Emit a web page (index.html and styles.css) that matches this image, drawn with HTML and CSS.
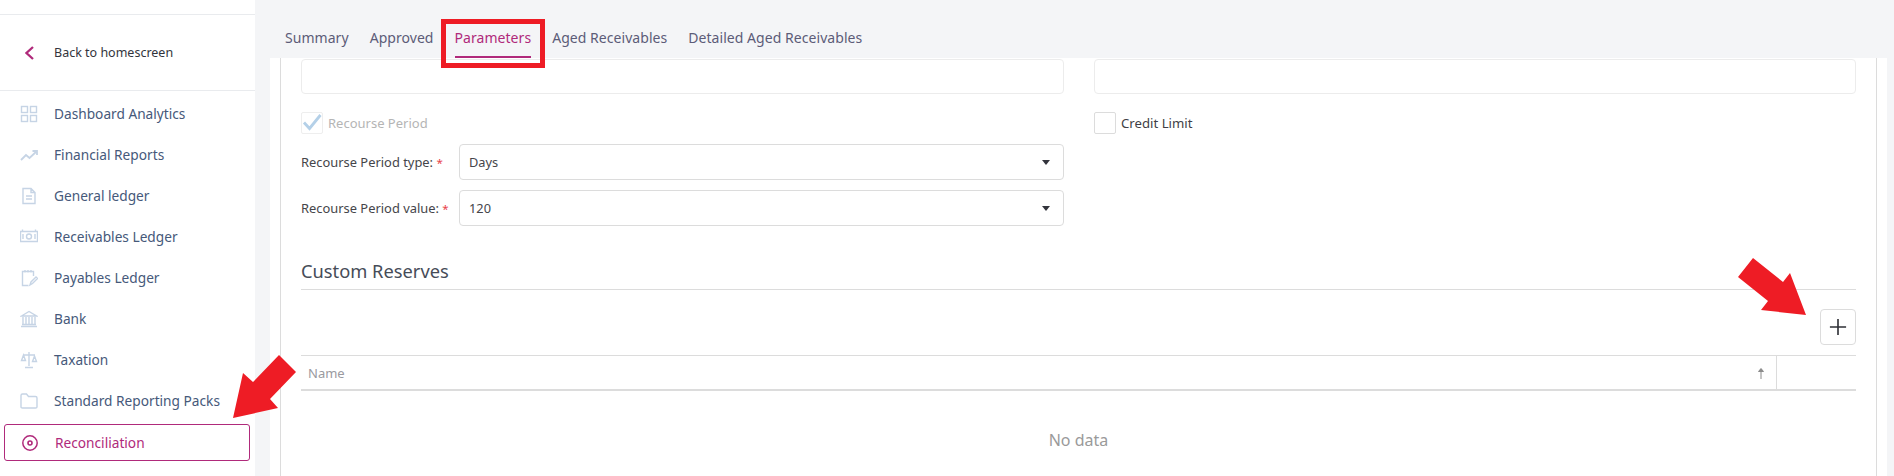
FILE: index.html
```html
<!DOCTYPE html>
<html lang="en">
<head>
<meta charset="utf-8">
<title>Parameters</title>
<link rel="stylesheet" href="styles.css">
</head>
<body>
<aside class="sidebar">
  <div class="side-top"></div>
  <a class="back"><svg class="chev" viewBox="0 0 10 14"><path d="M8 1 1.500 7 8 13"/></svg><span>Back to homescreen</span></a>
  <nav class="menu">
    <a class="item"><svg viewBox="0 0 18 18"><rect x="1.500" y="1.500" width="6" height="6"/><rect x="10.500" y="1.500" width="6" height="6"/><rect x="1.500" y="10.500" width="6" height="6"/><rect x="10.500" y="10.500" width="6" height="6"/></svg><span>Dashboard Analytics</span></a>
    <a class="item"><svg class="bold" viewBox="0 0 18 18"><path d="M1 14 6 9l3.500 3L17 5M12.500 5H17v4"/></svg><span>Financial Reports</span></a>
    <a class="item"><svg viewBox="0 0 18 18"><path d="M3 1.500h8l4 4v11H3zM11 1.500v4h4M6 9h6M6 12h6"/></svg><span>General ledger</span></a>
    <a class="item"><svg viewBox="0 0 18 18"><path d="M0.500 3.500h17v10H.5zM2.500 1.500v2M15.500 1.500v2"/><circle cx="9" cy="8.500" r="2.500"/><path d="M3 6v5M15 6v5"/></svg><span>Receivables Ledger</span></a>
    <a class="item"><svg viewBox="0 0 18 18"><path d="M13.500 7V2.500h-11v14h6M5 1v2.500M8 1v2.500M11 1v2.500M10 16l1-3 5-5 1.500 1.500-5 5z"/></svg><span>Payables Ledger</span></a>
    <a class="item"><svg viewBox="0 0 18 18"><path d="M1.500 6 9 1.500 16.500 6zM3 7v7M6 7v7M9 7v7M12 7v7M15 7v7M2 14.500h14M1 16.500h16"/></svg><span>Bank</span></a>
    <a class="item"><svg viewBox="0 0 18 18"><path d="M9 1v14M5 16.500h8M3 4h12M3.500 4 1.500 9.500h4zM14.500 5l-2 5.500h4z"/></svg><span>Taxation</span></a>
    <a class="item"><svg viewBox="0 0 18 18"><path d="M1 3.500q0-1.500 1.500-1.500h4l2 2.500h7q1.500 0 1.500 1.500v9q0 1-1.500 1h-13Q1 16 1 15z"/></svg><span>Standard Reporting Packs</span></a>
    <a class="item active"><svg viewBox="0 0 18 18"><circle cx="9" cy="9" r="7.200"/><circle class="dot" cx="9" cy="9" r="2"/></svg><span>Reconciliation</span></a>
  </nav>
</aside>
<main class="main">
  <div class="tabs">
    <span class="tab">Summary</span>
    <span class="tab">Approved</span>
    <span class="tab current">Parameters<i class="callout"></i></span>
    <span class="tab">Aged Receivables</span>
    <span class="tab">Detailed Aged Receivables</span>
  </div>
  <div class="sheet">
    <section class="card">
      <div class="form">
        <div class="col">
          <div class="blank"></div>
          <label class="check muted"><span class="box checked"><svg viewBox="0 0 20 20"><path d="M2 9.500 7.500 15.500 18.500 2"/></svg></span>Recourse Period</label>
          <div class="field first"><span class="flabel">Recourse Period type: <em>*</em></span><div class="select"><span>Days</span><b class="caret"></b></div></div>
          <div class="field"><span class="flabel">Recourse Period value: <em>*</em></span><div class="select"><span>120</span><b class="caret"></b></div></div>
        </div>
        <div class="col">
          <div class="blank"></div>
          <label class="check"><span class="box"></span>Credit Limit</label>
        </div>
      </div>
      <h2 class="heading">Custom Reserves</h2>
      <div class="toolbar"><button class="add" type="button"><svg viewBox="0 0 20 20"><path d="M10 1v18M1 10h18"/></svg></button></div>
      <div class="thead">
        <div class="th-name"><span>Name</span><svg class="sort" viewBox="0 0 8 12"><path d="M4 12V2M1.500 4.500 4 1.500l2.500 3z"/></svg></div>
        <div class="th-act"></div>
      </div>
      <div class="empty">No data</div>
    </section>
  </div>
</main>
<svg class="annot" viewBox="0 0 1894 476"><polygon points="279,355 296,372 270,399 278,408 233,418 243,373 253,382"/><polygon points="1753,258 1738,277 1768,301 1761,310 1806,315 1790,273 1783,282"/></svg>
</body>
</html>
```
FILE: styles.css
```css
* { box-sizing: border-box; }
html, body { margin: 0; height: 476px; overflow: hidden; }
body { display: flex; background: #f4f5f7; font: 14px/20px "Noto Sans", sans-serif; color: #3f3f46; position: relative; }
.sidebar { width: 255px; flex: none; background: #fff; height: 476px; }
.side-top { height: 15px; border-bottom: 1px solid #e9ebee; }
.back { height: 76px; display: flex; align-items: center; padding-left: 25px; border-bottom: 1px solid #e9ebee; font-size: 12.5px; color: #33343c; }
.chev { width: 10px; height: 14px; margin-right: 19px; fill: none; stroke: #b02a7b; stroke-width: 2.300; }
.menu { padding-top: 2px; }
.item { height: 41px; display: flex; align-items: center; padding-left: 20px; color: #46597a; font-size: 13.700px; }
.item svg { width: 18px; height: 18px; margin-right: 16px; fill: none; stroke: #c6d4e5; stroke-width: 1.400; flex: none; }
.item svg.bold { stroke-width: 1.800; }
.item.active { height: 37px; margin: 3px 5px 2px 4px; padding-left: 16px; border: 1px solid #b02a7b; border-radius: 3px; color: #b02a7b; }
.item.active svg { stroke: #b02a7b; stroke-width: 1.500; margin-right: 16px; }
.item.active .dot { stroke-width: 1.600; }
.main { flex: 1; min-width: 0; display: flex; flex-direction: column; }
.tabs { height: 58px; flex: none; display: flex; gap: 21px; padding-left: 30px; letter-spacing: 0.050px; }
.tab { height: 58px; padding-top: 28px; color: #5c5c78; position: relative; }
.tab.current { color: #b02a7b; border-bottom: 2px solid #b02a7b; }
.callout { position: absolute; left: -14px; right: -14px; top: 19px; height: 49px; border: 5px solid #ee1c25; z-index: 3; }
.sheet { flex: 1; margin: 0 7px 0 15px; padding: 0 10px; background: #fff; min-height: 0; }
.card { height: 100%; border: solid #dcdcdc; border-width: 0 1px; padding: 1px 20px 0; }
.form { display: grid; grid-template-columns: 763px 762px; column-gap: 30px; }
.blank { height: 35px; border: 1px solid #ececec; border-radius: 4px; }
.check { display: flex; align-items: center; gap: 5px; margin-top: 18px; height: 22px; font-size: 13.200px; }
.muted { color: #b5b5b5; font-size: 13px; }
.box { width: 22px; height: 22px; border: 1px solid #dcdcdc; border-radius: 2px; flex: none; }
.box.checked { border-color: #eeeeee; }
.box svg { display: block; width: 20px; height: 20px; fill: none; stroke: #b4d0e8; stroke-width: 2.800; }
.field { display: flex; align-items: center; margin-top: 10px; height: 36px; }
.flabel { width: 158px; flex: none; font-size: 12.900px; color: #45454a; }
.flabel em { color: #e8414a; font-style: normal; font-size: 11.500px; }
.select { flex: 1; height: 36px; display: flex; align-items: center; justify-content: space-between; border: 1px solid #dcdcdc; border-radius: 4px; padding: 0 13px 0 9px; font-size: 12.800px; color: #45454a; }
.caret { width: 0; height: 0; border: 4px solid transparent; border-top: 5px solid #33343c; border-bottom: 0; }
.heading { margin: 34px 0 0; height: 30px; border-bottom: 1px solid #dcdcdc; font: 400 18.300px/22px "Noto Sans", sans-serif; color: #464c58; }
.toolbar { display: flex; justify-content: flex-end; padding-top: 19px; }
.add { width: 36px; height: 36px; padding: 0; display: flex; align-items: center; justify-content: center; background: #fff; border: 1px solid #dcdcdc; border-radius: 4px; }
.add svg { width: 18px; height: 18px; fill: none; stroke: #2f3036; stroke-width: 1.800; }
.thead { display: flex; margin-top: 10px; height: 36px; border-top: 1px solid #dcdcdc; border-bottom: 2px solid #dcdcdc; }
.th-name { flex: 1; display: flex; align-items: center; justify-content: space-between; padding: 0 11px 0 7px; border-right: 1px solid #dcdcdc; color: #9a9a9f; font-size: 13px; }
.th-act { width: 79px; flex: none; }
.sort { width: 8px; height: 12px; fill: #8c8c8c; stroke: #8c8c8c; stroke-width: 1; }
.empty { text-align: center; margin-top: 38px; font-size: 16px; line-height: 22px; color: #9a9a9a; }
.annot { position: absolute; left: 0; top: 0; width: 1894px; height: 476px; pointer-events: none; z-index: 5; fill: #ee1c25; }
```
